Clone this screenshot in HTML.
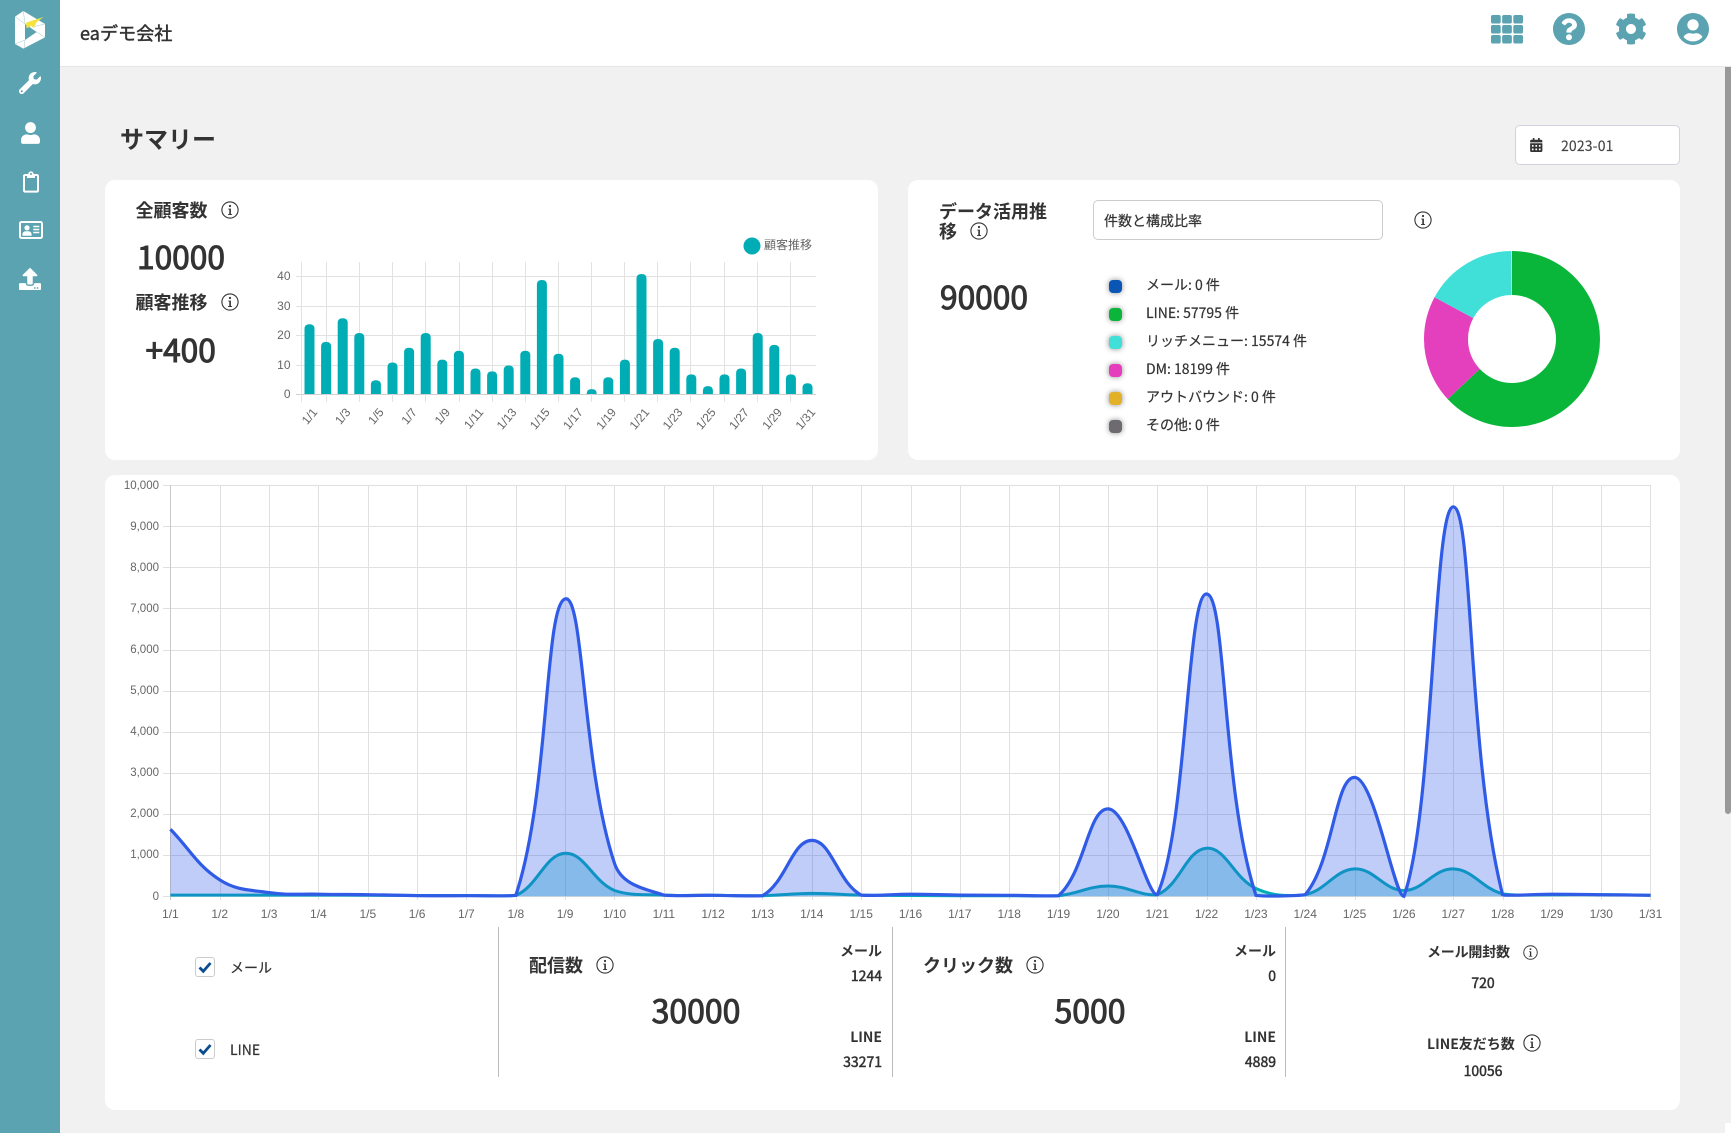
<!DOCTYPE html>
<html lang="ja"><head><meta charset="utf-8"><title>サマリー</title>
<style>
*{box-sizing:border-box}
html,body{margin:0;padding:0;width:1731px;height:1133px;overflow:hidden;background:#f1f1f1;color:#333;font-family:"Noto Sans CJK JP","Liberation Sans",sans-serif}
.a{position:absolute;white-space:nowrap;line-height:20px;height:20px}
.card{position:absolute;background:#fff;border-radius:10px}
.h{font-size:18px;font-weight:700}
.big{font-size:31.7px;font-weight:400;line-height:40px;height:40px;-webkit-text-stroke:1px #333}
.big2{font-size:32px}
.b14{font-size:14px;font-weight:700}
.m14{font-size:14px;font-weight:400;-webkit-text-stroke:.5px #333}
.r14{font-size:14px;font-weight:400;-webkit-text-stroke:.2px #333}
.dot{position:absolute;left:1109px;width:13px;height:13px;border-radius:4px;box-shadow:0 0 6px rgba(0,0,0,.45)}
.chk{position:absolute;left:195px;width:20px;height:20px;background:#fff;border:1px solid #ccc;border-radius:3px}
.info{position:absolute}
svg{display:block}
</style></head><body>
<svg width="0" height="0" style="position:absolute"><defs>
<symbol id="inf" viewBox="0 0 18 18"><circle cx="9" cy="9" r="8.1" fill="#fff" stroke="#333" stroke-width="1.1"/><circle cx="9" cy="5" r="1.1" fill="#333"/><path d="M7.3 7.6h2.6v5.5h1.2v.9H7v-.9h1.3V8.5h-1z" fill="#333"/></symbol>
</defs></svg>

<div style="position:absolute;left:0;top:0;width:60px;height:1133px;background:#5ba3b0"></div>
<div style="position:absolute;left:60px;top:0;width:1671px;height:67px;background:#fff;border-bottom:1px solid #e6e6e6"></div>
<div style="position:absolute;right:0;top:67px;width:6px;height:747px;background:#999;border-radius:0 0 3px 3px"></div>
<div style="position:absolute;right:0;top:1123px;width:6px;height:10px;background:#fff"></div>

<!-- sidebar icons -->
<svg class="info" style="left:0;top:0" width="60" height="60" viewBox="0 0 180 180">
<path d="M70 33 135 72V112L70 146 45 132V50Z" fill="#fff"/>
<path d="M75 72 75 120 110 96Z" fill="#5ba3b0"/>
<path d="M70 33 75 72M45 50 75 72M45 132 75 120M135 112 110 96M75 120 72 146M100 80 135 72" stroke="#9cc8d0" stroke-width="1.5" fill="none"/>
<path d="M78 68 131 51 110 66 100 85 95 77 80 85Z" fill="#f5e23a"/>
</svg>
<svg class="info" style="left:19px;top:72px" width="22" height="22" viewBox="0 0 512 512"><path fill="#fff" d="M507.73 109.1c-2.24-9.03-13.54-12.09-20.12-5.51l-74.36 74.36-67.88-11.31-11.31-67.88 74.36-74.36c6.62-6.62 3.43-17.9-5.66-20.16-47.38-11.74-99.55.91-136.58 37.93-39.64 39.64-50.55 97.1-34.05 147.2L18.74 402.76c-24.99 24.99-24.99 65.51 0 90.5 24.99 24.99 65.51 24.99 90.5 0l213.21-213.21c50.12 16.71 107.47 5.68 147.37-34.22 37.07-37.07 49.7-89.32 37.91-136.73zM64 472c-13.25 0-24-10.75-24-24 0-13.26 10.75-24 24-24s24 10.74 24 24c0 13.25-10.75 24-24 24z"/></svg>
<svg class="info" style="left:20.5px;top:121.5px" width="19" height="22" viewBox="0 0 448 512"><path fill="#fff" d="M224 256c70.7 0 128-57.3 128-128S294.7 0 224 0 96 57.3 96 128s57.3 128 128 128zm89.6 32h-16.7c-22.2 10.2-46.9 16-72.9 16s-50.6-5.8-72.9-16h-16.7C60.2 288 0 348.2 0 422.4V464c0 26.5 21.5 48 48 48h352c26.5 0 48-21.5 48-48v-41.6c0-74.2-60.2-134.4-134.4-134.4z"/></svg>
<svg class="info" style="left:22.5px;top:170.5px" width="16" height="22" viewBox="0 0 384 512"><path fill="#fff" d="M336 64h-80c0-35.3-28.7-64-64-64s-64 28.7-64 64H48C21.5 64 0 85.5 0 112v352c0 26.5 21.5 48 48 48h288c26.5 0 48-21.5 48-48V112c0-26.5-21.5-48-48-48zM192 40c13.3 0 24 10.7 24 24s-10.7 24-24 24-24-10.7-24-24 10.7-24 24-24zm144 418c0 3.3-2.7 6-6 6H54c-3.3 0-6-2.7-6-6V118c0-3.3 2.7-6 6-6h42v36c0 6.6 5.4 12 12 12h168c6.6 0 12-5.4 12-12v-36h42c3.3 0 6 2.7 6 6z"/></svg>
<svg class="info" style="left:19px;top:221px" width="24" height="18" viewBox="0 0 24 18"><rect x="1" y="1" width="22" height="16" rx="1.5" fill="none" stroke="#fff" stroke-width="2"/><circle cx="8" cy="6.8" r="2.6" fill="#fff"/><path d="M3.4 14.8v-1.500c0-1.900 1.600-3.100 3.400-3.100h2.400c1.800 0 3.400 1.200 3.400 3.100v1.500z" fill="#fff"/><path d="M14.300 5.500h6M14.300 8.500h6M14.300 11.500h6" stroke="#fff" stroke-width="1.600"/></svg>
<svg class="info" style="left:19px;top:268px" width="22" height="22" viewBox="0 0 512 512"><path fill="#fff" d="M296 384h-80c-13.3 0-24-10.7-24-24V192h-87.7c-17.8 0-26.7-21.5-14.1-34.1L242.3 5.7c7.5-7.5 19.8-7.5 27.3 0l152.2 152.2c12.6 12.6 3.7 34.1-14.1 34.1H320v168c0 13.3-10.7 24-24 24zm216-8v112c0 13.3-10.7 24-24 24H24c-13.3 0-24-10.7-24-24V376c0-13.3 10.7-24 24-24h136v8c0 30.9 25.1 56 56 56h80c30.9 0 56-25.1 56-56v-8h136c13.3 0 24 10.7 24 24zm-124 88c0-11-9-20-20-20s-20 9-20 20 9 20 20 20 20-9 20-20zm64 0c0-11-9-20-20-20s-20 9-20 20 9 20 20 20 20-9 20-20z"/></svg>

<!-- header -->
<div class="a" style="left:80px;top:23px;font-size:18px;font-weight:400;-webkit-text-stroke:.5px #333;letter-spacing:.1px">eaデモ会社</div>
<svg class="info" style="left:1491px;top:15px" width="32" height="28.500" viewBox="0 0 32 28.500" fill="#5ba3b0"><rect width="9.700" height="8.500" rx="1.800"/><rect x="11.150" width="9.700" height="8.500" rx="1.800"/><rect x="22.300" width="9.700" height="8.500" rx="1.800"/><rect y="10" width="9.700" height="8.500" rx="1.800"/><rect x="11.150" y="10" width="9.700" height="8.500" rx="1.800"/><rect x="22.300" y="10" width="9.700" height="8.500" rx="1.800"/><rect y="20" width="9.700" height="8.500" rx="1.800"/><rect x="11.150" y="20" width="9.700" height="8.500" rx="1.800"/><rect x="22.300" y="20" width="9.700" height="8.500" rx="1.800"/></svg>
<svg class="info" style="left:1553px;top:13px" width="32" height="32" viewBox="8 8 496 496"><path fill="#5ba3b0" d="M504 256c0 136.997-111.043 248-248 248S8 392.997 8 256C8 119.083 119.043 8 256 8s248 111.083 248 248zM262.655 90c-54.497 0-89.255 22.957-116.549 63.758-3.536 5.286-2.353 12.415 2.715 16.258l34.699 26.31c5.205 3.947 12.621 3.008 16.665-2.122 17.864-22.658 30.113-35.797 57.303-35.797 20.429 0 45.698 13.148 45.698 32.958 0 14.976-12.363 22.667-32.534 33.976C247.128 238.528 216 254.941 216 296v4c0 6.627 5.373 12 12 12h56c6.627 0 12-5.373 12-12v-1.333c0-28.462 83.186-29.647 83.186-106.667 0-58.002-60.165-102-116.531-102zM256 338c-25.365 0-46 20.635-46 46 0 25.364 20.635 46 46 46s46-20.636 46-46c0-25.365-20.635-46-46-46z"/></svg>
<svg class="info" style="left:1615px;top:13px" width="32" height="32" viewBox="0 0 512 512"><path fill="#5ba3b0" d="M487.4 315.7l-42.6-24.6c4.3-23.2 4.3-47 0-70.2l42.6-24.6c4.9-2.8 7.1-8.6 5.500-14-11.100-35.600-30-67.800-54.700-94.600-3.800-4.100-10-5.100-14.800-2.300L380.800 110c-17.900-15.400-38.500-27.300-60.800-35.100V25.800c0-5.600-3.900-10.500-9.400-11.700-36.700-8.200-74.300-7.800-109.200 0-5.500 1.200-9.400 6.100-9.400 11.700V75c-22.200 7.900-42.800 19.800-60.800 35.100L88.700 85.500c-4.900-2.800-11-1.900-14.800 2.300-24.700 26.700-43.600 58.900-54.700 94.600-1.700 5.400.6 11.200 5.500 14L67.300 221c-4.300 23.200-4.300 47 0 70.200l-42.600 24.600c-4.900 2.800-7.100 8.600-5.500 14 11.100 35.600 30 67.800 54.700 94.600 3.800 4.100 10 5.100 14.800 2.300l42.600-24.600c17.900 15.400 38.500 27.300 60.800 35.100v49.200c0 5.600 3.900 10.500 9.400 11.700 36.700 8.200 74.300 7.800 109.200 0 5.500-1.200 9.400-6.100 9.400-11.700v-49.200c22.200-7.900 42.800-19.800 60.800-35.100l42.600 24.600c4.900 2.800 11 1.900 14.800-2.300 24.700-26.700 43.600-58.900 54.700-94.600 1.500-5.500-.7-11.300-5.600-14.100zM256 336c-44.100 0-80-35.900-80-80s35.900-80 80-80 80 35.900 80 80-35.900 80-80 80z"/></svg>
<svg class="info" style="left:1676.5px;top:13px" width="32" height="32" viewBox="0 8 496 496"><path fill="#5ba3b0" d="M248 8C111 8 0 119 0 256s111 248 248 248 248-111 248-248S385 8 248 8zm0 96c48.600 0 88 39.400 88 88s-39.400 88-88 88-88-39.400-88-88 39.400-88 88-88zm0 344c-58.700 0-111.300-26.600-146.500-68.200 18.800-35.400 55.600-59.800 98.500-59.800 2.400 0 4.800.4 7.100 1.100 13 4.200 26.600 6.900 40.900 6.900 14.300 0 28-2.700 40.900-6.900 2.300-.7 4.700-1.100 7.100-1.100 42.900 0 79.700 24.400 98.500 59.800C359.300 421.400 306.700 448 248 448z"/></svg>

<!-- title and date -->
<div class="a" style="left:120px;top:124.5px;height:26px;line-height:26px;font-size:24px;font-weight:700">サマリー</div>
<div style="position:absolute;left:1515px;top:125px;width:165px;height:40px;background:#fff;border:1px solid #d3d3df;border-radius:5px"></div>
<svg class="info" style="left:1530px;top:138px" width="12.500" height="14" viewBox="0 0 448 512"><path fill="#333" d="M0 464c0 26.500 21.500 48 48 48h352c26.500 0 48-21.500 48-48V192H0v272zm320-196c0-6.600 5.400-12 12-12h40c6.600 0 12 5.400 12 12v40c0 6.600-5.400 12-12 12h-40c-6.600 0-12-5.400-12-12v-40zm0 128c0-6.600 5.400-12 12-12h40c6.600 0 12 5.400 12 12v40c0 6.600-5.400 12-12 12h-40c-6.600 0-12-5.400-12-12v-40zM192 268c0-6.600 5.400-12 12-12h40c6.600 0 12 5.400 12 12v40c0 6.600-5.400 12-12 12h-40c-6.600 0-12-5.400-12-12v-40zm0 128c0-6.600 5.400-12 12-12h40c6.600 0 12 5.400 12 12v40c0 6.600-5.400 12-12 12h-40c-6.600 0-12-5.400-12-12v-40zM64 268c0-6.600 5.400-12 12-12h40c6.600 0 12 5.400 12 12v40c0 6.600-5.400 12-12 12H76c-6.600 0-12-5.400-12-12v-40zm0 128c0-6.600 5.400-12 12-12h40c6.600 0 12 5.400 12 12v40c0 6.600-5.400 12-12 12H76c-6.600 0-12-5.400-12-12v-40zM400 64h-48V16c0-8.800-7.200-16-16-16h-32c-8.800 0-16 7.200-16 16v48H160V16c0-8.800-7.200-16-16-16h-32c-8.800 0-16 7.200-16 16v48H48C21.500 64 0 85.500 0 112v48h448v-48c0-26.500-21.500-48-48-48z"/></svg>
<div class="a r14" style="left:1561px;top:135.5px;color:#444;-webkit-text-stroke:.15px #444;letter-spacing:.15px">2023-01</div>

<!-- cards -->
<div class="card" style="left:105px;top:180px;width:773px;height:280px"></div>
<div class="card" style="left:908px;top:180px;width:772px;height:280px"></div>
<div class="card" style="left:105px;top:475px;width:1575px;height:635px"></div>

<!-- charts -->
<svg id="chart" class="info" style="left:0;top:0" width="1731" height="1133" viewBox="0 0 1731 1133" font-family="'Liberation Sans',sans-serif" font-size="12" fill="#666">
<defs><clipPath id="cp"><rect x="168" y="480" width="1484" height="418"/></clipPath></defs>
<g id="barGrid" stroke="#e2e2e2" stroke-width="1"></g>
<g id="bars" fill="#00adb5"></g>
<g text-anchor="end"><text x="290.500" y="280">40</text><text x="290.500" y="310">30</text><text x="290.500" y="339">20</text><text x="290.500" y="369">10</text><text x="290.500" y="398">0</text></g>
<circle cx="752" cy="246" r="8.500" fill="#00adb5"/>
<text x="764" y="249" font-family="'Liberation Sans','Noto Sans CJK JP',sans-serif">顧客推移</text>
<g text-anchor="end">
<text transform="translate(318 412.500) rotate(-50)">1/1</text><text transform="translate(351.200 412.500) rotate(-50)">1/3</text><text transform="translate(384.400 412.500) rotate(-50)">1/5</text><text transform="translate(417.600 412.500) rotate(-50)">1/7</text><text transform="translate(450.800 412.500) rotate(-50)">1/9</text><text transform="translate(484 412.500) rotate(-50)">1/11</text><text transform="translate(517.200 412.500) rotate(-50)">1/13</text><text transform="translate(550.400 412.500) rotate(-50)">1/15</text><text transform="translate(583.600 412.500) rotate(-50)">1/17</text><text transform="translate(616.800 412.500) rotate(-50)">1/19</text><text transform="translate(650 412.500) rotate(-50)">1/21</text><text transform="translate(683.200 412.500) rotate(-50)">1/23</text><text transform="translate(716.400 412.500) rotate(-50)">1/25</text><text transform="translate(749.600 412.500) rotate(-50)">1/27</text><text transform="translate(782.800 412.500) rotate(-50)">1/29</text><text transform="translate(816 412.500) rotate(-50)">1/31</text>
</g>

<g fill="none" stroke-width="44">
<circle cx="1512" cy="339" r="66" stroke="#0ab639" pathLength="360" stroke-dasharray="227.200 360" transform="rotate(-90 1512 339)"/>
<circle cx="1512" cy="339" r="66" stroke="#e43fbd" pathLength="360" stroke-dasharray="71.500 360" stroke-dashoffset="-227.200" transform="rotate(-90 1512 339)"/>
<circle cx="1512" cy="339" r="66" stroke="#40e0d8" pathLength="360" stroke-dasharray="61.300 360" stroke-dashoffset="-298.700" transform="rotate(-90 1512 339)"/>
</g>

<g id="lineGrid" stroke="#e0e0e0" stroke-width="1"></g>
<g text-anchor="end" font-size="11.500">
<text x="159" y="489">10,000</text><text x="159" y="530">9,000</text><text x="159" y="571">8,000</text><text x="159" y="612">7,000</text><text x="159" y="653">6,000</text><text x="159" y="694">5,000</text><text x="159" y="735">4,000</text><text x="159" y="776">3,000</text><text x="159" y="817">2,000</text><text x="159" y="858">1,000</text><text x="159" y="900">0</text>
</g>
<g text-anchor="middle">
<text x="170.400" y="918">1/1</text><text x="219.700" y="918">1/2</text><text x="269.100" y="918">1/3</text><text x="318.400" y="918">1/4</text><text x="367.800" y="918">1/5</text><text x="417.100" y="918">1/6</text><text x="466.400" y="918">1/7</text><text x="515.800" y="918">1/8</text><text x="565.100" y="918">1/9</text><text x="614.500" y="918">1/10</text><text x="663.800" y="918">1/11</text><text x="713.100" y="918">1/12</text><text x="762.500" y="918">1/13</text><text x="811.800" y="918">1/14</text><text x="861.200" y="918">1/15</text><text x="910.500" y="918">1/16</text><text x="959.800" y="918">1/17</text><text x="1009.200" y="918">1/18</text><text x="1058.500" y="918">1/19</text><text x="1107.900" y="918">1/20</text><text x="1157.200" y="918">1/21</text><text x="1206.500" y="918">1/22</text><text x="1255.900" y="918">1/23</text><text x="1305.200" y="918">1/24</text><text x="1354.600" y="918">1/25</text><text x="1403.900" y="918">1/26</text><text x="1453.200" y="918">1/27</text><text x="1502.600" y="918">1/28</text><text x="1551.900" y="918">1/29</text><text x="1601.300" y="918">1/30</text><text x="1650.600" y="918">1/31</text>
</g>
<g clip-path="url(#cp)">
<path id="tealA" fill="rgba(0,172,200,.33)" stroke="none"/>
<path id="tealL" fill="none" stroke="#00adb5" stroke-width="3"/>
<path id="blueA" fill="rgba(47,91,231,.3)" stroke="none"/>
<path id="blueL" fill="none" stroke="#2f5be7" stroke-width="3.200"/>
</g>
<path d="M498.500 927V1077M892.500 927V1077M1285.500 927V1077" stroke="#bbb" stroke-width="1"/>
</svg>

<!-- card 1 text -->
<div class="a h" style="left:135.5px;top:200px">全顧客数</div>
<svg class="info" style="left:220.500px;top:201px" width="18" height="18"><use href="#inf"/></svg>
<div class="a big" style="left:137px;top:236px">10000</div>
<div class="a h" style="left:135.5px;top:292px">顧客推移</div>
<svg class="info" style="left:220.500px;top:293px" width="18" height="18"><use href="#inf"/></svg>
<div class="a big" style="left:145.500px;top:329px">+400</div>

<!-- card 2 text -->
<div class="a h" style="left:939px;top:201px">データ活用推</div>
<div class="a h" style="left:939px;top:220.5px">移</div>
<svg class="info" style="left:970px;top:221.5px" width="18" height="18"><use href="#inf"/></svg>
<div style="position:absolute;left:1093px;top:200px;width:290px;height:40px;background:#fff;border:1px solid #ccc;border-radius:5px"></div>
<div class="a r14" style="left:1104px;top:210.5px">件数と構成比率</div>
<svg class="info" style="left:1414px;top:211px" width="18" height="18"><use href="#inf"/></svg>
<div class="a big" style="left:940px;top:276px">90000</div>
<div class="dot" style="top:280px;background:#0a56b4"></div>
<div class="dot" style="top:308px;background:#0ab53a"></div>
<div class="dot" style="top:336px;background:#40dfd8"></div>
<div class="dot" style="top:364px;background:#e43ebc"></div>
<div class="dot" style="top:392px;background:#e3b02a"></div>
<div class="dot" style="top:420px;background:#6d6b70"></div>
<div class="a r14" style="left:1146px;top:275px">メール: 0 件</div>
<div class="a r14" style="left:1146px;top:303px">LINE: 57795 件</div>
<div class="a r14" style="left:1146px;top:331px">リッチメニュー: 15574 件</div>
<div class="a r14" style="left:1146px;top:359px">DM: 18199 件</div>
<div class="a r14" style="left:1146px;top:387px">アウトバウンド: 0 件</div>
<div class="a r14" style="left:1146px;top:415px">その他: 0 件</div>

<!-- bottom -->
<div class="chk" style="top:957px"><svg width="18" height="18" viewBox="0 0 18 18"><path d="M3.500 9.500 7.300 13.300 14.500 5" fill="none" stroke="#0b4d8f" stroke-width="2.800"/></svg></div>
<div class="chk" style="top:1039px"><svg width="18" height="18" viewBox="0 0 18 18"><path d="M3.500 9.500 7.300 13.300 14.500 5" fill="none" stroke="#0b4d8f" stroke-width="2.800"/></svg></div>
<div class="a r14" style="left:230px;top:958px">メール</div>
<div class="a r14" style="left:230px;top:1040px">LINE</div>

<div class="a h" style="left:529px;top:955px">配信数</div>
<svg class="info" style="left:596px;top:956px" width="18" height="18"><use href="#inf"/></svg>
<div class="a big big2" style="left:498px;width:394px;top:990px;text-align:center;padding-left:2px">30000</div>
<div class="a b14" style="right:849px;top:941px">メール</div>
<div class="a m14" style="right:849px;top:966px">1244</div>
<div class="a b14" style="right:849px;top:1027px">LINE</div>
<div class="a m14" style="right:849px;top:1052px">33271</div>

<div class="a h" style="left:923px;top:955px">クリック数</div>
<svg class="info" style="left:1026px;top:956px" width="18" height="18"><use href="#inf"/></svg>
<div class="a big big2" style="left:892px;width:394px;top:990px;text-align:center;padding-left:2px">5000</div>
<div class="a b14" style="right:455px;top:941px">メール</div>
<div class="a m14" style="right:455px;top:966px">0</div>
<div class="a b14" style="right:455px;top:1027px">LINE</div>
<div class="a m14" style="right:455px;top:1052px">4889</div>

<div class="a b14" style="left:1427px;top:942px;letter-spacing:-.2px">メール開封数</div>
<svg class="info" style="left:1523px;top:945px" width="15" height="15"><use href="#inf"/></svg>
<div class="a m14" style="left:1383px;width:200px;top:973px;text-align:center">720</div>
<div class="a b14" style="left:1427px;top:1034px">LINE友だち数</div>
<svg class="info" style="left:1523px;top:1034px" width="18" height="18"><use href="#inf"/></svg>
<div class="a m14" style="left:1383px;width:200px;top:1061px;text-align:center">10056</div>

<script>
(function(){
var NS='http://www.w3.org/2000/svg';
function el(p,n,a){var e=document.createElementNS(NS,n);for(var k in a)e.setAttribute(k,a[k]);p.appendChild(e);return e;}
// bar chart
var g=document.getElementById('barGrid');
[276,305.5,335,364.5,394].forEach(function(y){el(g,'line',{x1:296,x2:816,y1:Math.round(y)+.5,y2:Math.round(y)+.5,stroke:y==394?'#cfcfcf':'#e2e2e2'});});
el(g,'line',{x1:301.5,x2:301.5,y1:262,y2:402});
for(var i=0;i<15;i++){var x=Math.round(326+33.13*i)+.5;el(g,'line',{x1:x,x2:x,y1:262,y2:402});}
var v=[24,18,26,21,5,11,16,21,12,15,9,8,10,15,39,14,6,2,6,12,41,19,16,7,3,7,9,21,17,7,4];
var b=document.getElementById('bars');
v.forEach(function(n,i){var c=309.5+16.6*i,t=395-n*2.95,r=Math.min(4.5,n*2.95);
el(b,'path',{d:'M'+(c-5)+' 394V'+(t+r)+'Q'+(c-5)+' '+t+' '+c+' '+t+'Q'+(c+5)+' '+t+' '+(c+5)+' '+(t+r)+'V394Z'});});
// line chart
var L=170.4,S=49.34,Y0=896.3,K=0.04113,R=L+S*30,T=485;
g=document.getElementById('lineGrid');
for(i=0;i<=10;i++){var y=Math.round(Y0-i*1000*K)+.5;el(g,'line',{x1:163,x2:1651,y1:y,y2:y});}
for(i=0;i<=30;i++){var x=Math.min(Math.round(L+S*i)+.5,1650.5);el(g,'line',{x1:x,x2:x,y1:485,y2:900,stroke:i==0?'#c8c8c8':'#e0e0e0'});}
function cap(q){return [Math.min(R,Math.max(L,q[0])),Math.min(Y0,Math.max(T,q[1]))];}
function path(d,t){var p=d.map(function(n,i){return [L+S*i,Y0-n*K];}),c=[];
p.forEach(function(q,i){var a=p[i-1]||q,e=p[i+1]||q,d1=Math.hypot(q[0]-a[0],q[1]-a[1]),d2=Math.hypot(e[0]-q[0],e[1]-q[1]),s=d1+d2||1,f1=t*d1/s,f2=t*d2/s;
c.push([cap([q[0]-f1*(e[0]-a[0]),q[1]-f1*(e[1]-a[1])]),cap([q[0]+f2*(e[0]-a[0]),q[1]+f2*(e[1]-a[1])])]);});
var s='M'+p[0][0].toFixed(1)+' '+p[0][1].toFixed(1);
for(var i=1;i<p.length;i++){s+='C'+c[i-1][1][0].toFixed(1)+' '+c[i-1][1][1].toFixed(1)+' '+c[i][0][0].toFixed(1)+' '+c[i][0][1].toFixed(1)+' '+p[i][0].toFixed(1)+' '+p[i][1].toFixed(1);}
return s;}
var blue=[1630,400,90,50,40,16,15,24,7230,800,30,25,15,1360,30,50,30,25,15,2125,40,7350,25,40,2890,0,9470,40,50,40,25];
var teal=[30,30,30,30,25,20,20,20,1045,140,30,25,15,70,30,20,15,15,15,250,40,1170,190,40,665,140,665,60,40,40,25];
var bp=path(blue,.4),tp=path(teal,.4),cl='L'+R.toFixed(1)+' '+Y0+'L'+L+' '+Y0+'Z';
document.getElementById('blueL').setAttribute('d',bp);
document.getElementById('blueA').setAttribute('d',bp+cl);
document.getElementById('tealL').setAttribute('d',tp);
document.getElementById('tealA').setAttribute('d',tp+cl);
})();
</script>
</body></html>
